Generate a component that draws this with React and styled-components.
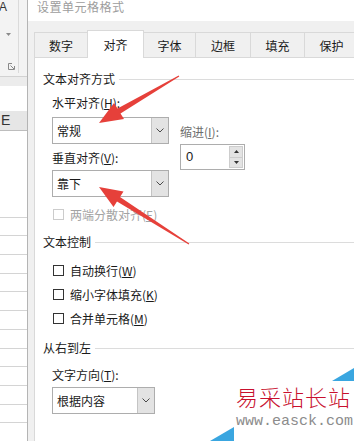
import React from "react";
import styled, { createGlobalStyle } from "styled-components";

const GlobalStyle = createGlobalStyle`
  html, body { margin: 0; padding: 0; }
  body {
    width: 354px;
    height: 441px;
    overflow: hidden;
    background: #fff;
    font-family: "Noto Sans CJK SC", "Liberation Sans", sans-serif;
    font-size: 12px;
    color: #1a1a1a;
  }
`;

const Screen = styled.div`
  position: relative;
  display: flex;
  width: 354px;
  height: 441px;
  overflow: hidden;
`;

/* excel sheet peeking out on the left */
const Sheet = styled.div`
  width: 27px;
  flex-shrink: 0;
  display: flex;
  flex-direction: column;
  background: #fff;
`;

const Ribbon = styled.div`
  height: 77px;
  background: #f3f3f3;
  border-bottom: 1px solid #d2d2d2;
`;

const RibbonGroup = styled.div`
  width: 18px;
  height: 73px;
  border-right: 1px solid #dadada;
  display: flex;
  flex-direction: column;
`;

const FontGlyph = styled.span`
  font-family: "Liberation Sans", sans-serif;
  font-size: 12px;
  line-height: 12px;
  margin: 1px 0 0 -1px;
  color: #333;
`;

const DropMark = styled.svg`
  margin: 20px 0 0 6px;
`;

const Launcher = styled.svg`
  margin: 27px 0 0 8px;
`;

const FormulaBand = styled.div`
  height: 9px;
  background: #ececec;
`;

const FormulaGap = styled.div`
  height: 26px;
`;

const ColumnHead = styled.div`
  height: 19px;
  background: #e6e6e6;
  border-bottom: 1px solid #bdbdbd;
  padding-left: 1px;
  font-family: "Liberation Sans", sans-serif;
  font-size: 14px;
  line-height: 19px;
  color: #333;
`;

const BlankCells = styled.div`
  height: 87px;
`;

const GridRow = styled.div`
  height: 18px;
  border-top: 1px solid #d4d4d4;
`;

/* dialog */
const Dialog = styled.div`
  flex: 1;
  display: flex;
  flex-direction: column;
  border-left: 1px solid #b4b4b4;
  background: #f0f0f0;
`;

const TitleBar = styled.div`
  height: 21px;
  box-sizing: border-box;
  padding: 1px 0 0 9px;
  background: #fff;
`;

const Title = styled.div`
  line-height: 12px;
  font-size: 12px;
  color: #9d9d9d;
  letter-spacing: 0.5px;
`;

const DialogBody = styled.div`
  flex: 1;
  display: flex;
  flex-direction: column;
  padding-left: 6px;
`;

const TabBar = styled.div`
  height: 36px;
  display: flex;
  align-items: flex-end;
`;

const Tab = styled.div`
  width: ${p => p.w}px;
  height: ${p => (p.active ? 28 : 25)}px;
  box-sizing: border-box;
  display: flex;
  align-items: center;
  justify-content: center;
  border: 1px solid #d9d9d9;
  border-bottom: none;
  margin-left: -1px;
  margin-bottom: ${p => (p.active ? -1 : 0)}px;
  background: ${p => (p.active ? "#fff" : "#f0f0f0")};
  position: relative;
  z-index: ${p => (p.active ? 1 : 0)};
  font-size: 12px;
  color: #1a1a1a;
  &:first-child { margin-left: 0; }
`;

const Panel = styled.div`
  flex: 1;
  background: #fff;
  border-left: 1px solid #d9d9d9;
  border-top: 1px solid #d9d9d9;
  padding: 13px 0 0 8px;
  display: flex;
  flex-direction: column;
`;

const GroupTitle = styled.div`
  display: flex;
  align-items: center;
  height: 16px;
  line-height: 16px;
  margin-top: ${p => p.gap || 0}px;
  white-space: nowrap;
  &::after {
    content: "";
    flex: 1;
    height: 1px;
    background: #dcdcdc;
    margin-left: 4px;
  }
`;

const GroupBody = styled.div`
  padding-left: 9px;
  display: flex;
  flex-direction: column;
`;

const AlignRow = styled.div`
  display: flex;
  gap: 11px;
`;

const Column = styled.div`
  display: flex;
  flex-direction: column;
  width: ${p => (p.w ? `${p.w}px` : "auto")};
`;

const FieldLabel = styled.div`
  height: 16px;
  line-height: 16px;
  margin-top: ${p => p.gap || 0}px;
  white-space: nowrap;
  color: ${p => (p.muted ? "#6e6e6e" : "#1a1a1a")};
`;

const SelectBox = styled.div`
  width: ${p => p.w}px;
  height: 27px;
  box-sizing: border-box;
  margin-top: ${p => p.gap || 0}px;
  border: 1px solid #adadad;
  background: #fff;
  display: flex;
`;

const SelectValue = styled.div`
  flex: 1;
  padding-left: 4px;
  line-height: 25px;
  font-size: 12px;
`;

const SelectButton = styled.div`
  width: 16px;
  background: #e3e3e3;
  border-left: 1px solid #c4c4c4;
  display: flex;
  align-items: center;
  justify-content: center;
`;

const Spinner = styled.div`
  width: 65px;
  height: 26px;
  box-sizing: border-box;
  margin-top: 4px;
  border: 1px solid #adadad;
  display: flex;
`;

const SpinValue = styled.div`
  flex: 1;
  padding-left: 5px;
  line-height: 24px;
  font-family: "Liberation Sans", sans-serif;
  font-size: 13px;
`;

const SpinButtons = styled.div`
  width: 14px;
  margin: 1px 1px 1px 0;
  display: flex;
  flex-direction: column;
`;

const SpinButton = styled.div`
  flex: 1;
  background: #e3e3e3;
  border: 1px solid #cdcdcd;
  display: flex;
  align-items: center;
  justify-content: center;
  & + & { border-top: none; }
`;

const CheckList = styled.div`
  margin-top: ${p => p.gap || 0}px;
  display: flex;
  flex-direction: column;
`;

const CheckRow = styled.div`
  height: ${p => p.h || 24}px;
  margin-top: ${p => p.gap || 0}px;
  display: flex;
  align-items: center;
  color: ${p => (p.disabled ? "#a3a3a3" : "#1a1a1a")};
  white-space: nowrap;
`;

const Box = styled.span`
  width: 11px;
  height: 11px;
  box-sizing: border-box;
  margin-left: 1px;
  margin-right: 6px;
  border: 1px solid ${p => (p.disabled ? "#cccccc" : "#333333")};
  background: #fff;
`;

/* overlays: annotation arrows + site watermark */
const Arrows = styled.svg`
  position: absolute;
  left: 0;
  top: 0;
  pointer-events: none;
`;

const Watermark = styled.div`
  position: absolute;
  left: 210px;
  top: 366px;
  width: 144px;
  height: 75px;
`;

const WatermarkArt = styled.svg`
  position: absolute;
  left: 0;
  top: 0;
`;

const WatermarkText = styled.div`
  position: relative;
  padding: 16px 0 0 26px;
  display: flex;
  flex-direction: column;
`;

const SiteName = styled.div`
  font-size: 22px;
  font-weight: 300;
  line-height: 28px;
  letter-spacing: 1px;
  color: #c8102e;
  white-space: nowrap;
`;

const SiteUrl = styled.div`
  margin-top: 3px;
  font-family: "Liberation Mono", monospace;
  font-size: 15px;
  line-height: 18px;
  color: #8c8c8c;
  white-space: nowrap;
`;

const Chevron = () => (
  <svg width="8" height="5" viewBox="0 0 8 5">
    <polyline points="0.5,0.5 4,4 7.5,0.5" fill="none" stroke="#4a4a4a" strokeWidth="1" />
  </svg>
);

const Select = ({ w, gap, value }) => (
  <SelectBox w={w} gap={gap}>
    <SelectValue>{value}</SelectValue>
    <SelectButton>
      <Chevron />
    </SelectButton>
  </SelectBox>
);

const tabs = [
  { label: "数字", w: 54 },
  { label: "对齐", w: 57, active: true },
  { label: "字体", w: 53 },
  { label: "边框", w: 56 },
  { label: "填充", w: 55 },
  { label: "保护", w: 55 },
];

const App = () => {
  return (
    <Screen>
      <GlobalStyle />
      <Sheet>
        <Ribbon>
          <RibbonGroup>
            <FontGlyph>A</FontGlyph>
            <DropMark width="5" height="3" viewBox="0 0 5 3">
              <polygon points="0,0 5,0 2.5,3" fill="#8a8a8a" />
            </DropMark>
            <Launcher width="7" height="7" viewBox="0 0 7 7">
              <polyline points="4,0.5 0.5,0.5 0.5,6.5 6.5,6.5 6.5,3" fill="none" stroke="#888" strokeWidth="1" />
              <line x1="2.5" y1="2.5" x2="6" y2="6" stroke="#888" strokeWidth="1" />
            </Launcher>
          </RibbonGroup>
        </Ribbon>
        <FormulaBand />
        <FormulaGap />
        <ColumnHead>E</ColumnHead>
        <BlankCells />
        {Array.from({ length: 12 }).map((_, i) => (
          <GridRow key={i} />
        ))}
      </Sheet>

      <Dialog>
        <TitleBar>
          <Title>设置单元格格式</Title>
        </TitleBar>
        <DialogBody>
          <TabBar>
            {tabs.map(t => (
              <Tab key={t.label} w={t.w} active={t.active}>
                {t.label}
              </Tab>
            ))}
          </TabBar>
          <Panel>
            <GroupTitle>文本对齐方式</GroupTitle>
            <GroupBody>
              <AlignRow>
                <Column w={117}>
                  <FieldLabel gap={8}>水平对齐(<u>H</u>):</FieldLabel>
                  <Select w={117} gap={6} value="常规" />
                  <FieldLabel gap={6}>垂直对齐(<u>V</u>):</FieldLabel>
                  <Select w={117} gap={4} value="靠下" />
                </Column>
                <Column>
                  <FieldLabel gap={37} muted>缩进(<u>I</u>):</FieldLabel>
                  <Spinner>
                    <SpinValue>0</SpinValue>
                    <SpinButtons>
                      <SpinButton>
                        <svg width="5" height="3" viewBox="0 0 5 3"><polygon points="2.5,0 5,3 0,3" fill="#333" /></svg>
                      </SpinButton>
                      <SpinButton>
                        <svg width="5" height="3" viewBox="0 0 5 3"><polygon points="0,0 5,0 2.5,3" fill="#333" /></svg>
                      </SpinButton>
                    </SpinButtons>
                  </Spinner>
                </Column>
              </AlignRow>
              <CheckRow h={16} gap={9} disabled>
                <Box disabled />
                两端分散对齐(<u>E</u>)
              </CheckRow>
            </GroupBody>

            <GroupTitle gap={12}>文本控制</GroupTitle>
            <GroupBody>
              <CheckList gap={8}>
                <CheckRow><Box />自动换行(<u>W</u>)</CheckRow>
                <CheckRow><Box />缩小字体填充(<u>K</u>)</CheckRow>
                <CheckRow><Box />合并单元格(<u>M</u>)</CheckRow>
              </CheckList>
            </GroupBody>

            <GroupTitle gap={10}>从右到左</GroupTitle>
            <GroupBody>
              <FieldLabel gap={11}>文字方向(<u>T</u>):</FieldLabel>
              <Select w={103} gap={4} value="根据内容" />
            </GroupBody>
          </Panel>
        </DialogBody>
      </Dialog>

      <Arrows width="354" height="441" viewBox="0 0 354 441">
        <polygon
          points="99,123 114,103 117.5,108.5 178.7,75.6 179.3,76.4 120.5,113.5 124,119"
          fill="#e6403a"
        />
        <polygon
          points="99,187 123.5,191.5 120,197 189.3,243.6 188.7,244.4 117,201.5 113.5,207"
          fill="#e6403a"
        />
      </Arrows>

      <Watermark>
        <WatermarkArt width="144" height="75" viewBox="0 0 144 75">
          <polygon points="122,15 144,2 144,15" fill="#3aa6e0" />
          <polygon points="0,75 24,61 24,75" fill="#3aa6e0" />
          <rect x="24" y="15" width="120" height="60" fill="#fff" />
        </WatermarkArt>
        <WatermarkText>
          <SiteName>易采站长站</SiteName>
          <SiteUrl>www.easck.com</SiteUrl>
        </WatermarkText>
      </Watermark>
    </Screen>
  );
};

export default App;
